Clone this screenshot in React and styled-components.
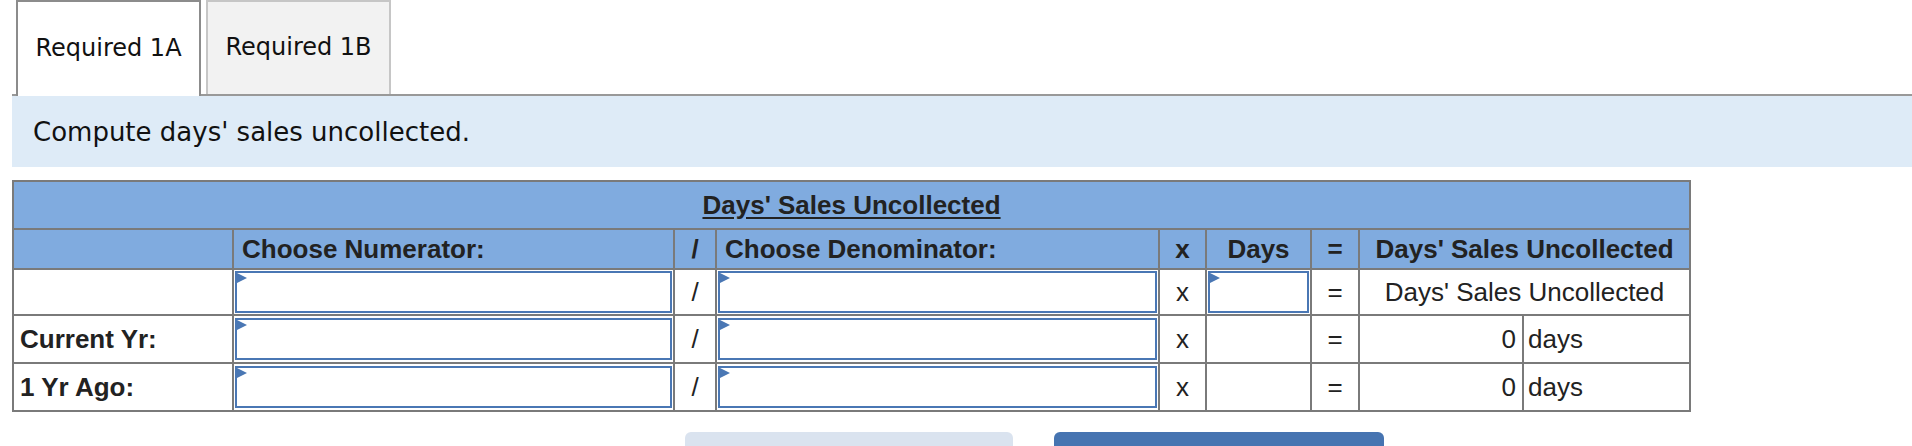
import React from "react";
import styled, { createGlobalStyle } from "styled-components";

const GlobalStyle = createGlobalStyle`
  html, body {
    margin: 0;
    padding: 0;
    background: #fff;
    overflow: hidden;
  }
  body {
    font-family: "DejaVu Sans", Verdana, sans-serif;
  }
`;

const Page = styled.div`
  padding-left: 12px;
`;

const TabBar = styled.div`
  display: flex;
  align-items: flex-end;
  gap: 5px;
  height: 94px;
  padding-left: 4px;
  border-bottom: 2px solid #999;
`;

const Tab = styled.div`
  box-sizing: border-box;
  width: 185px;
  height: ${(p) => (p.$active ? "96px" : "94px")};
  margin-bottom: ${(p) => (p.$active ? "-2px" : "0")};
  padding-bottom: 2px;
  display: flex;
  align-items: center;
  justify-content: center;
  border: 2px solid ${(p) => (p.$active ? "#8c8c8c" : "#c6c6c6")};
  border-bottom: none;
  background: ${(p) => (p.$active ? "#fff" : "#f2f2f2")};
  font-size: 24px;
  color: #111;
  cursor: pointer;
`;

const Prompt = styled.div`
  box-sizing: border-box;
  height: 71px;
  display: flex;
  align-items: center;
  padding-left: 21px;
  background: #deebf7;
  font-size: 26px;
  color: #111;
`;

const Table = styled.table`
  margin-top: 13px;
  border-collapse: collapse;
  table-layout: fixed;
  width: 1677px;
  font-family: "Liberation Sans", Arial, sans-serif;
  font-size: 26px;
  color: #222;
  border: 2px solid #7a7a7a;
`;

const Row = styled.tr`
  height: ${(p) => p.$h}px;
`;

const TitleCell = styled.th`
  border: 2px solid #7a7a7a;
  background: #80abdf;
  text-align: center;
  font-weight: 700;
  text-decoration: underline;
  text-underline-offset: 3px;
`;

const HeadCell = styled.th`
  border: 2px solid #7a7a7a;
  background: #80abdf;
  padding: 0 ${(p) => (p.$align === "left" ? "8px" : "2px")};
  text-align: ${(p) => p.$align || "center"};
  font-weight: 700;
  white-space: nowrap;
`;

const Cell = styled.td`
  border: 2px solid #7a7a7a;
  background: #fff;
  padding: ${(p) => (p.$tight ? "0 1px" : "0 6px")};
  text-align: ${(p) => p.$align || "center"};
  font-weight: ${(p) => (p.$bold ? 700 : 400)};
  white-space: nowrap;
`;

const Unit = styled(Cell)`
  padding: 0 4px;
  text-align: left;
`;

const Field = styled.div`
  position: relative;
  box-sizing: border-box;
  height: 42px;
  border: 2px solid #4a77b4;
  background: #fff;

  &::before {
    content: "";
    position: absolute;
    left: 0;
    top: 0;
    border-left: 10px solid #4a77b4;
    border-top: 5px solid transparent;
    border-bottom: 5px solid transparent;
  }
`;

const Actions = styled.div`
  display: flex;
  gap: 41px;
  padding-left: 673px;
  margin-top: 20px;
`;

const ActionButton = styled.button`
  width: ${(p) => (p.$primary ? "330px" : "328px")};
  height: 62px;
  border: none;
  border-radius: 6px;
  background: ${(p) => (p.$primary ? "#4674b1" : "#dae3ef")};
`;

const widths = [220, 441, 42, 443, 47, 105, 48, 164, 167];

const rows = [
  { label: "Current Yr:", value: 0, h: 48 },
  { label: "1 Yr Ago:", value: 0, h: 48 },
];

const App = () => {
  return (
    <Page>
      <GlobalStyle />
      <TabBar>
        <Tab $active>Required 1A</Tab>
        <Tab>Required 1B</Tab>
      </TabBar>
      <Prompt>Compute days' sales uncollected.</Prompt>

      <Table>
        <colgroup>
          {widths.map((w, i) => (
            <col key={i} style={{ width: w }} />
          ))}
        </colgroup>
        <tbody>
          <Row $h={48}>
            <TitleCell colSpan={9}>Days' Sales Uncollected</TitleCell>
          </Row>
          <Row $h={40}>
            <HeadCell />
            <HeadCell $align="left">Choose Numerator:</HeadCell>
            <HeadCell>/</HeadCell>
            <HeadCell $align="left">Choose Denominator:</HeadCell>
            <HeadCell>x</HeadCell>
            <HeadCell>Days</HeadCell>
            <HeadCell>=</HeadCell>
            <HeadCell colSpan={2}>Days' Sales Uncollected</HeadCell>
          </Row>
          <Row $h={46}>
            <Cell />
            <Cell $tight>
              <Field />
            </Cell>
            <Cell>/</Cell>
            <Cell $tight>
              <Field />
            </Cell>
            <Cell>x</Cell>
            <Cell $tight>
              <Field />
            </Cell>
            <Cell>=</Cell>
            <Cell colSpan={2}>Days' Sales Uncollected</Cell>
          </Row>
          {rows.map((r) => (
            <Row $h={r.h} key={r.label}>
              <Cell $bold $align="left">
                {r.label}
              </Cell>
              <Cell $tight>
                <Field />
              </Cell>
              <Cell>/</Cell>
              <Cell $tight>
                <Field />
              </Cell>
              <Cell>x</Cell>
              <Cell />
              <Cell>=</Cell>
              <Cell $align="right">{r.value}</Cell>
              <Unit>days</Unit>
            </Row>
          ))}
        </tbody>
      </Table>

      <Actions>
        <ActionButton disabled aria-label="Required 1A" />
        <ActionButton $primary aria-label="Required 1B" />
      </Actions>
    </Page>
  );
};

export default App;
